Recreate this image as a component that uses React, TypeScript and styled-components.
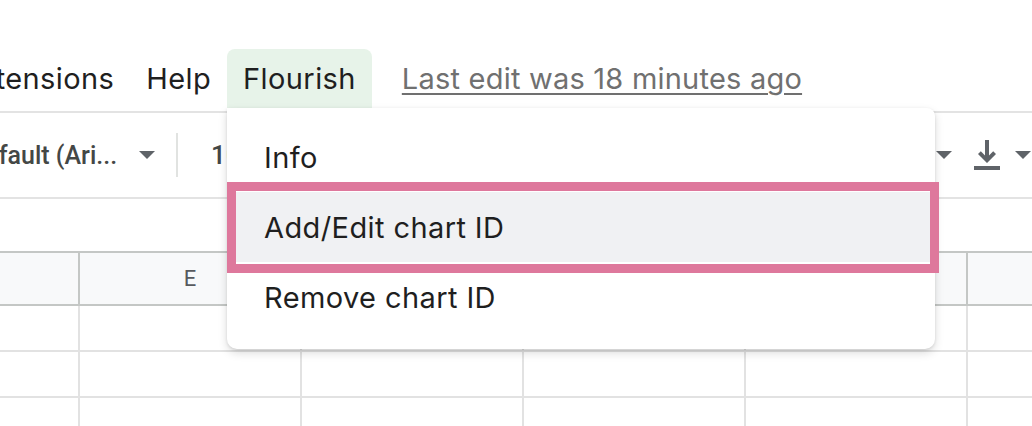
import React from 'react';
import styled, { createGlobalStyle } from 'styled-components';

const GlobalStyle = createGlobalStyle`
  html, body {
    margin: 0;
    padding: 0;
    background: #ffffff;
  }
  body {
    font-family: Inter, Roboto, 'Liberation Sans', Arial, sans-serif;
    overflow: hidden;
  }
`;

const Page = styled.div`
  position: relative;
  width: 1032px;
  height: 426px;
  overflow: hidden;
  background: #ffffff;
  padding-top: 49px;
  box-sizing: border-box;
`;

const MenuBar = styled.div`
  display: flex;
  align-items: flex-start;
  height: 64px;
  margin-left: -55px;
  border-bottom: 2px solid #e3e3e3;
  box-sizing: border-box;
`;

const MenuItem = styled.div<{ $active?: boolean }>`
  height: 59px;
  display: flex;
  align-items: center;
  padding: 0 16px;
  font-size: 29px;
  letter-spacing: 0.4px;
  color: #1f1f1f;
  border-radius: 8px 8px 0 0;
  background: ${(p) => (p.$active ? '#e7f3e9' : 'transparent')};
  white-space: nowrap;
`;

const LastEdit = styled.a`
  height: 59px;
  display: flex;
  align-items: center;
  margin-left: 30px;
  font-size: 29px;
  letter-spacing: 0.22px;
  color: #707070;
  text-decoration: underline;
  text-underline-offset: 4px;
  text-decoration-thickness: 2px;
  white-space: nowrap;
`;

const Toolbar = styled.div`
  display: flex;
  align-items: center;
  height: 86px;
  border-bottom: 2px solid #e3e3e3;
  box-sizing: border-box;
  margin-left: -31px;
  font-family: Roboto, 'Liberation Sans', Arial, sans-serif;
`;

const FontName = styled.div`
  font-size: 25px;
  font-weight: 500;
  color: #444746;
  white-space: nowrap;
`;

const Caret = styled.div<{ $ml?: number }>`
  width: 0;
  height: 0;
  margin-left: ${(p) => p.$ml ?? 0}px;
  border-left: 8px solid transparent;
  border-right: 8px solid transparent;
  border-top: 8px solid #5f6368;
`;

const Separator = styled.div`
  width: 2px;
  height: 44px;
  background: #e1e3e1;
  margin-left: 21px;
`;

const FontSize = styled.div`
  margin-left: 33px;
  font-size: 26px;
  font-weight: 500;
  color: #444746;
`;

const Spacer = styled.div`
  flex: 1;
`;

const ToolIcon = styled.div`
  display: flex;
  align-items: center;
  margin-left: 21px;
  color: #5f6368;
`;

const FormulaBar = styled.div`
  height: 54px;
  border-bottom: 2px solid #c4c7c5;
  box-sizing: border-box;
`;

const Grid = styled.div`
  display: grid;
  grid-template-columns: 80px repeat(5, 222px);
`;

const HeaderCell = styled.div`
  height: 53px;
  background: #f8f9fa;
  border-right: 2px solid #c4c7c5;
  border-bottom: 2px solid #c4c7c5;
  box-sizing: border-box;
  display: flex;
  align-items: center;
  justify-content: center;
  font-family: Roboto, 'Liberation Sans', Arial, sans-serif;
  font-size: 22px;
  color: #575a5e;
`;

const Cell = styled.div`
  height: 46px;
  border-right: 2px solid #e2e2e2;
  border-bottom: 2px solid #e2e2e2;
  box-sizing: border-box;
`;

const Dropdown = styled.div`
  position: absolute;
  top: 108px;
  left: 227px;
  width: 708px;
  height: 241px;
  padding: 14px 0 17px;
  box-sizing: border-box;
  background: #ffffff;
  border-radius: 0 8px 10px 10px;
  box-shadow: 0 4px 10px rgba(0, 0, 0, 0.14), 0 1px 3px rgba(0, 0, 0, 0.1);
  z-index: 5;
`;

const DropItem = styled.div<{ $highlight?: boolean }>`
  position: relative;
  height: 70px;
  display: flex;
  align-items: center;
  padding-left: 37px;
  font-size: 29px;
  letter-spacing: 0.4px;
  color: #1f1f1f;
  background: ${(p) => (p.$highlight ? '#f0f1f3' : 'transparent')};

  ${(p) =>
    p.$highlight &&
    `
    &::after {
      content: '';
      position: absolute;
      top: -10px;
      bottom: -11px;
      left: 0;
      right: -4px;
      border: 9px solid #de789c;
      pointer-events: none;
    }
  `}
`;

const DownloadIcon = () => (
  <svg width="28" height="34" viewBox="0 0 28 34" fill="currentColor">
    <rect x="12" y="2" width="4" height="20" />
    <path d="M5 16 L14 25 L23 16 L20.2 13.2 L14 19.4 L7.8 13.2 Z" />
    <rect x="1" y="28" width="26" height="4" />
  </svg>
);

const columns = ['D', 'E', 'F', 'G', 'H', 'I'];

export default function App(): React.ReactElement {
  return (
    <>
      <GlobalStyle />
      <Page>
        <MenuBar>
          <MenuItem>Extensions</MenuItem>
          <MenuItem>Help</MenuItem>
          <MenuItem $active>Flourish</MenuItem>
          <LastEdit>Last edit was 18 minutes ago</LastEdit>
        </MenuBar>
        <Toolbar>
          <FontName>Default (Ari...</FontName>
          <Caret $ml={22} />
          <Separator />
          <FontSize>10</FontSize>
          <Spacer />
          <Caret />
          <ToolIcon>
            <DownloadIcon />
          </ToolIcon>
          <Caret $ml={14} />
          <div style={{ width: 1 }} />
        </Toolbar>
        <FormulaBar />
        <Grid>
          {columns.map((c, i) => (
            <HeaderCell key={c}>{i === 0 ? '' : c}</HeaderCell>
          ))}
          {[0, 1, 2].map((r) =>
            columns.map((c) => <Cell key={`${r}-${c}`} />)
          )}
        </Grid>
        <Dropdown>
          <DropItem>Info</DropItem>
          <DropItem $highlight>Add/Edit chart ID</DropItem>
          <DropItem>Remove chart ID</DropItem>
        </Dropdown>
      </Page>
    </>
  );
}
